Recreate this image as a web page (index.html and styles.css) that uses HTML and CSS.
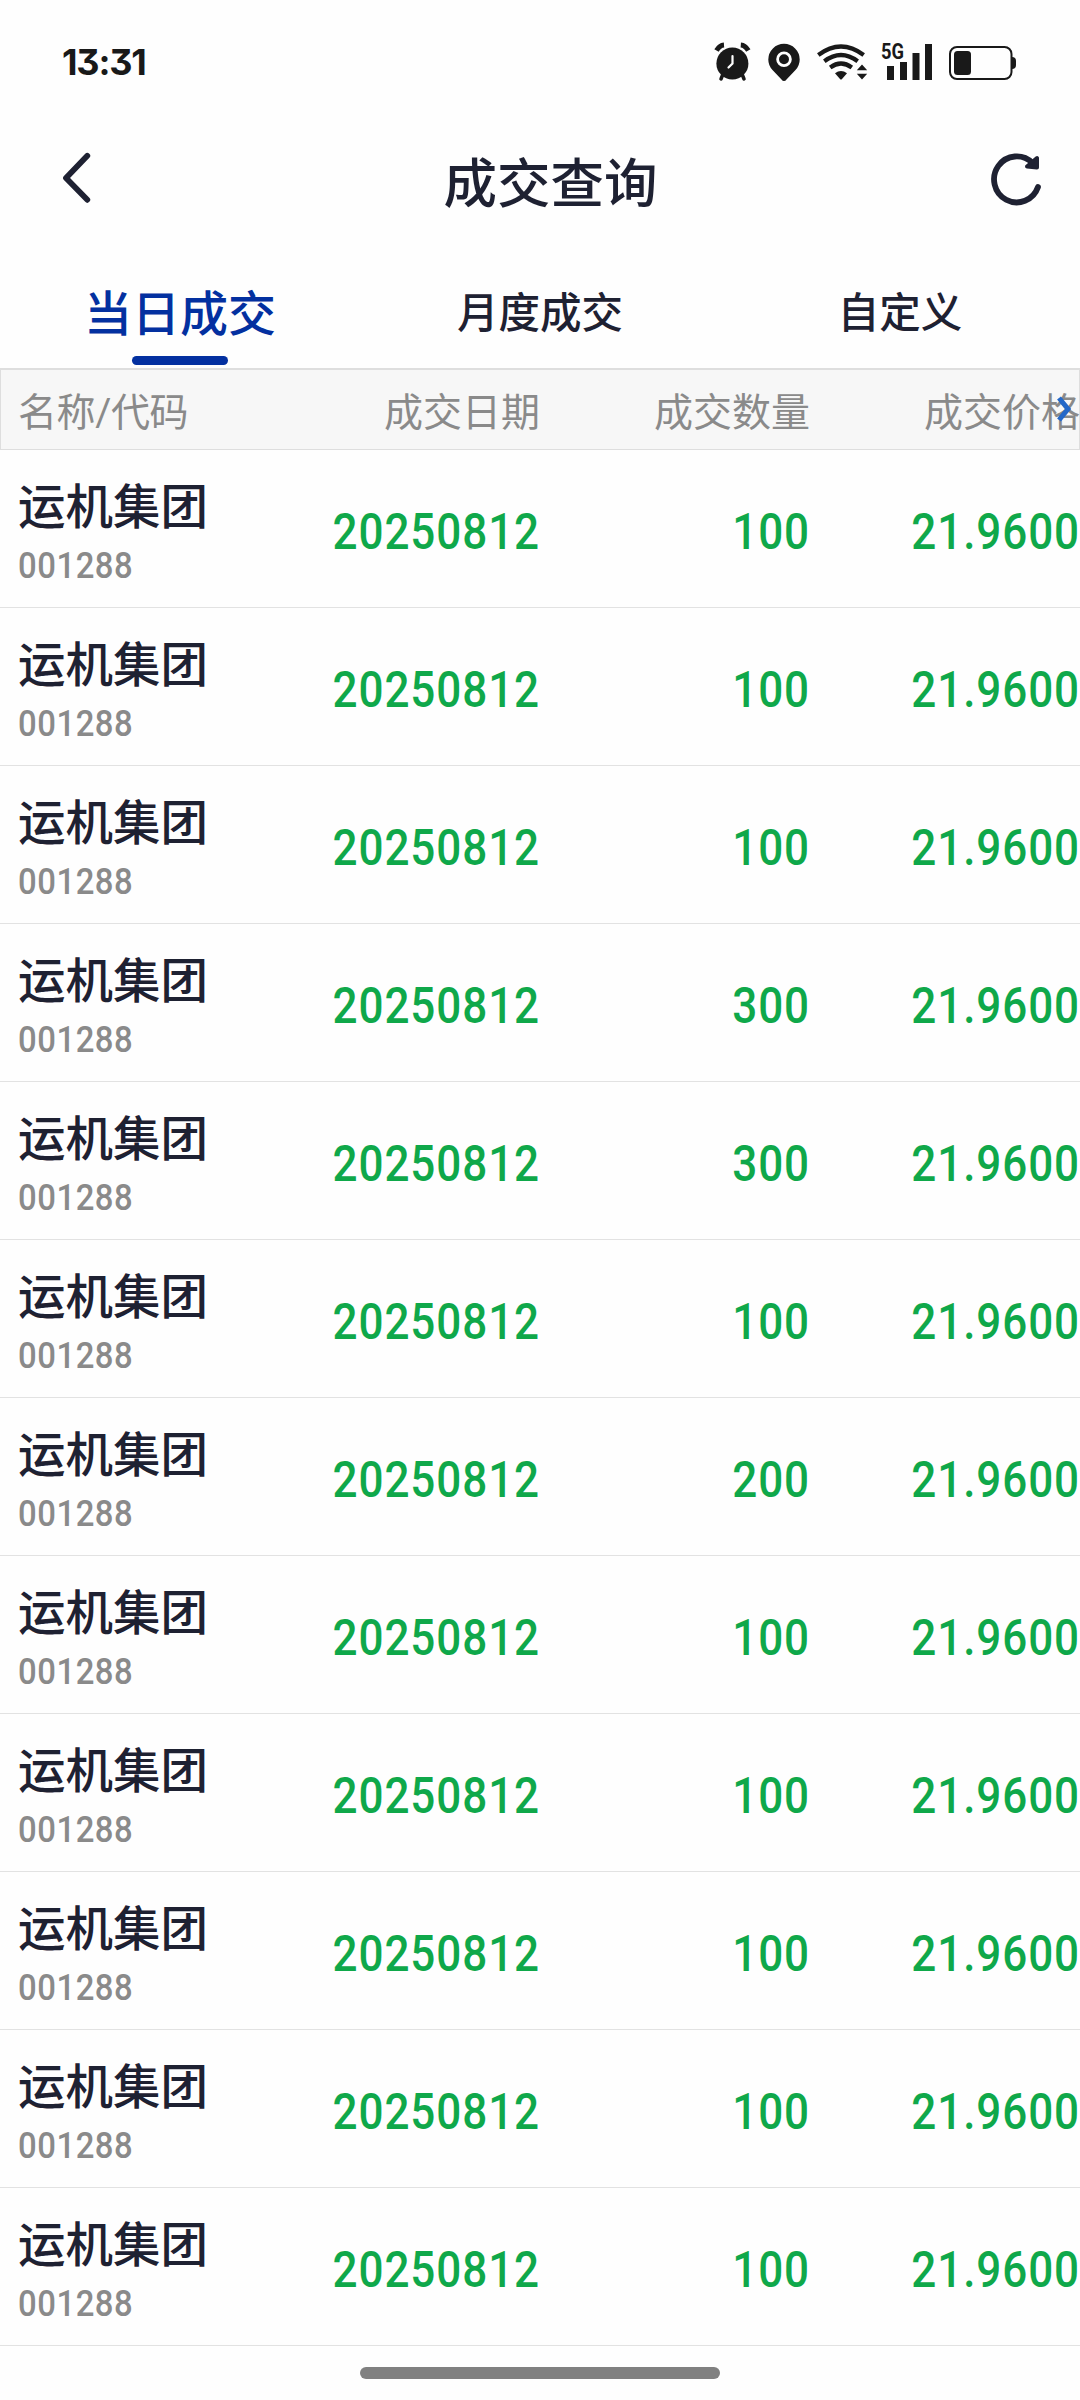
FILE: index.html
```html
<!DOCTYPE html>
<html lang="zh-CN">

<head>
    <meta charset="UTF-8">
    <meta name="viewport" content="width=device-width, initial-scale=1.0">
    <title>成交查询</title>
    <link rel="stylesheet" href="styles.css">
</head>

<body>
    <div class="status-bar">
        <span class="time">13:31</span>
        <div class="status-icons">
            <svg class="icon-alarm" width="37" height="38" viewBox="714 43 37 38">
                <circle cx="732.4" cy="63.5" r="16" fill="#191919" />
                <path d="M716.5 50.5 Q719.5 45.3 724 45" stroke="#191919" stroke-width="5" fill="none" />
                <path d="M748.3 50.5 Q745.3 45.3 740.8 45" stroke="#191919" stroke-width="5" fill="none" />
                <path d="M723 74 L721 79 M742 74 L744 79" stroke="#191919" stroke-width="3.5" stroke-linecap="round" />
                <path d="M732.5 56 V63.5 L728.5 67.5" stroke="#fff" stroke-width="2.2" fill="none" stroke-linecap="round" />
            </svg>
            <svg class="icon-pin" width="32" height="38" viewBox="768 43 32 38">
                <path d="M784 81 Q782.5 81 781.5 79.5 L772.5 70 Q768.3 65.5 768.3 59.5 A15.7 15.7 0 0 1 799.7 59.5 Q799.7 65.5 795.5 70 L786.5 79.5 Q785.5 81 784 81 Z" fill="#191919" />
                <circle cx="784" cy="59.3" r="6.4" fill="#191919" stroke="#fff" stroke-width="2.8" />
            </svg>
            <svg class="icon-wifi" width="52" height="38" viewBox="816 43 52 38">
                <path d="M818.3 55 Q841 38 863.7 55 M824.3 61.3 Q841 48.7 857.7 61.3 M830.2 67.5 Q841 59.5 851.8 67.5" fill="none" stroke="#191919" stroke-width="4.2" />
                <path d="M835 73.2 Q841 69 847 73.2 L842 79 Q841 80 840 79 Z" fill="#191919" />
                <path d="M856.8 70.3 L862 64.5 L867.2 70.3 Z M856.8 73.8 L867.2 73.8 L862 79.6 Z" fill="#191919" />
            </svg>
            <svg class="icon-signal" width="52" height="38" viewBox="881 43 52 38">
                <text class="network" x="881" y="59" textLength="23" lengthAdjust="spacingAndGlyphs">5G</text>
                <path d="M887 66 h7 v14 h-7 Z M900 62 h7 v18 h-7 Z M912.5 53 h7 v27 h-7 Z M925 44 h7 v36 h-7 Z" fill="#191919" />
            </svg>
            <svg class="icon-battery" width="67" height="38" viewBox="949 43 67 38">
                <rect x="950" y="47" width="61.5" height="32" rx="7" fill="none" stroke="#191919" stroke-width="2" />
                <rect x="954" y="51" width="17" height="24" rx="3.5" fill="#191919" />
                <path d="M1012 57 Q1016 57 1016 61 V65 Q1016 69 1012 69 Z" fill="#191919" />
            </svg>
        </div>
    </div>

    <header class="nav">
        <svg class="back" width="30" height="52" viewBox="61 153 30 52">
            <path d="M87.3 156.8 L66 179 L87.3 200.8" />
        </svg>
        <h1 class="title">成交查询</h1>
        <svg class="refresh" width="52" height="54" viewBox="991 152 52 54">
            <path d="M1038 187 A22.6 23 0 1 1 1032.5 163" />
            <path class="arrow" d="M1037 158 L1037 167.5 L1027 166.5 Z" />
        </svg>
    </header>

    <nav class="tabs">
        <div class="tab active">当日成交</div>
        <div class="tab">月度成交</div>
        <div class="tab">自定义</div>
    </nav>

    <div class="table-head">
        <span>名称/代码</span>
        <span>成交日期</span>
        <span>成交数量</span>
        <span>成交价格</span>
        <svg class="more" width="16" height="26" viewBox="0 0 16 26">
            <path d="M2 2 L11 13 L2 24" />
        </svg>
    </div>

    <div id="list"></div>

    <div class="home-bar"></div>

    <script>
        const amounts = [100, 100, 100, 300, 300, 100, 200, 100, 100, 100, 100, 100];
        const list = document.getElementById('list');

        amounts.forEach(amount => {
            const row = document.createElement('div');
            row.className = 'row';
            row.innerHTML = `
                <div class="stock">
                    <div class="name">运机集团</div>
                    <div class="code">001288</div>
                </div>
                <div class="value">20250812</div>
                <div class="value">${amount}</div>
                <div class="value">21.9600</div>`;
            list.appendChild(row);
        });
    </script>
</body>

</html>
```

FILE: styles.css
```css
* {
    box-sizing: border-box;
}

body {
    margin: 0;
    width: 1080px;
    height: 2400px;
    overflow: hidden;
    background-color: #fefefe;
    color: #1e2132;
    font-family: Roboto, 'Noto Sans CJK SC', sans-serif;
}

.status-bar {
    display: flex;
    justify-content: space-between;
    height: 124px;
    padding: 43px 64px 0 62px;
}

.time {
    font-family: Inter, sans-serif;
    font-size: 36px;
    font-weight: 650;
    line-height: 38px;
    color: #191919;
    font-feature-settings: "cv09";
    letter-spacing: -1.2px;
}

.status-icons {
    display: flex;
}

.status-icons svg {
    overflow: visible;
}

.icon-pin {
    margin-left: 17px;
}

.icon-wifi {
    margin-left: 16px;
}

.icon-signal {
    margin-left: 13px;
}

.icon-battery {
    margin-left: 16px;
}

.network {
    font-family: Roboto, sans-serif;
    font-size: 21.5px;
    font-weight: 700;
    fill: #191919;
}

.nav {
    display: flex;
    justify-content: space-between;
    height: 146px;
    padding: 28px 37px 0 61px;
}

.nav path {
    fill: none;
    stroke: #1e2132;
    stroke-width: 5.8;
    stroke-linecap: round;
    stroke-linejoin: round;
}

.nav .arrow {
    fill: #1e2132;
    stroke-width: 4;
}

.title {
    margin: 0;
    padding-left: 19px;
    font-size: 53.5px;
    font-weight: 500;
    line-height: 66px;
}

.tabs {
    display: flex;
    height: 98px;
}

.tab {
    display: flex;
    flex-direction: column;
    align-items: center;
    width: 360px;
    padding-top: 13px;
    font-size: 41.5px;
    font-weight: 500;
    line-height: 62px;
}

.tab.active {
    padding-top: 14px;
    font-size: 48px;
    color: #0330a0;
}

.tab.active::after {
    content: '';
    width: 96px;
    height: 9px;
    margin-top: 10px;
    border-radius: 5px;
    background-color: #0330a0;
}

.table-head {
    position: relative;
    display: grid;
    grid-template-columns: repeat(4, 270px);
    height: 82px;
    border: 1px solid #dedede;
    border-top-width: 2px;
    background-color: #f7f7f7;
    color: #8a8a8a;
    font-size: 39px;
    line-height: 86px;
    text-align: right;
}

.table-head span {
    margin-left: -1px;
    padding-right: 1px;
    white-space: nowrap;
}

.table-head span:first-child {
    padding-left: 18px;
    letter-spacing: -0.4px;
    text-align: left;
}

/* scroll hint over the last column */
.more {
    position: absolute;
    top: 26px;
    right: 6px;
}

.more path {
    fill: none;
    stroke: #2468c8;
    stroke-width: 5;
}

.row {
    display: grid;
    grid-template-columns: repeat(4, 270px);
    height: 158px;
    border-bottom: 1px solid #e2e2e2;
}

.stock {
    padding: 28px 0 0 18px;
}

.name {
    font-size: 47.5px;
    font-weight: 500;
    line-height: 61px;
}

.code {
    margin-top: 5px;
    font-size: 36.5px;
    font-weight: 500;
    line-height: 44px;
    letter-spacing: 0.6px;
    color: #8a8a8a;
    transform: scaleX(0.9);
    transform-origin: left;
}

.value {
    font-size: 49.5px;
    font-weight: 500;
    line-height: 165px;
    letter-spacing: 1px;
    text-align: right;
    color: #0fa84a;
    transform: scaleX(0.89);
    transform-origin: right;
}

.home-bar {
    width: 360px;
    height: 12px;
    margin: 21px auto 0;
    border-radius: 6px;
    background-color: #808080;
}
```
